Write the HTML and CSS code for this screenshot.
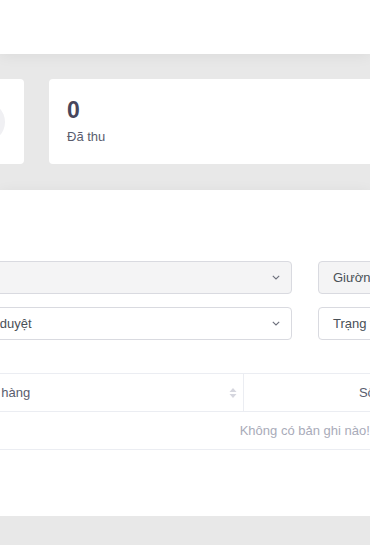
FILE: index.html
```html
<!DOCTYPE html>
<html lang="vi">

<head>
    <meta charset="UTF-8">
    <meta name="viewport" content="width=device-width, initial-scale=1.0">
    <title>Thống kê</title>
    <link rel="stylesheet" href="styles.css">
</head>

<body>
    <div class="topbar"></div>

    <div class="page">
        <div class="stats">
            <div class="stat-card">
                <div class="stat-icon"></div>
            </div>
            <div class="stat-card">
                <div class="stat-value">0</div>
                <div class="stat-label">Đã thu</div>
            </div>
        </div>
    </div>

    <div class="panel">
        <div class="page">
            <div class="filters">
                <div class="select disabled">
                    <span>Phòng</span>
                    <svg class="chevron" viewBox="0 0 8 5"><path d="M0.8 0.8l3.2 3.2 3.2-3.2" /></svg>
                </div>
                <div class="select disabled">
                    <span>Giường</span>
                    <svg class="chevron" viewBox="0 0 8 5"><path d="M0.8 0.8l3.2 3.2 3.2-3.2" /></svg>
                </div>
                <div class="select">
                    <span>Trạng thái đã duyệt</span>
                    <svg class="chevron" viewBox="0 0 8 5"><path d="M0.8 0.8l3.2 3.2 3.2-3.2" /></svg>
                </div>
                <div class="select">
                    <span>Trạng thái thanh toán</span>
                    <svg class="chevron" viewBox="0 0 8 5"><path d="M0.8 0.8l3.2 3.2 3.2-3.2" /></svg>
                </div>
            </div>

            <table class="data-table">
                <thead>
                    <tr>
                        <th class="col-no">#</th>
                        <th class="col-name">
                            <div class="th-inner">
                                <span>Mặt hàng</span>
                                <svg class="sort" viewBox="0 0 8 12">
                                    <path d="M4 1L7.5 5H0.5z" />
                                    <path d="M4 11L7.5 7H0.5z" />
                                </svg>
                            </div>
                        </th>
                        <th class="col-qty">Số lượng</th>
                        <th>Thành tiền</th>
                    </tr>
                </thead>
                <tbody>
                    <tr>
                        <td class="empty" colspan="4">Không có bản ghi nào!</td>
                    </tr>
                </tbody>
            </table>
        </div>
    </div>
</body>

</html>
```

FILE: styles.css
```css
body {
    margin: 0;
    background: #e8e8e8;
    font-family: "Liberation Sans", Arial, sans-serif;
    font-size: 13px;
    color: #595d6e;
    overflow: hidden;
}

.topbar {
    height: 54px;
    background: #ffffff;
    box-shadow: 0 2px 14px rgba(0, 0, 0, 0.06);
    position: relative;
}

.page {
    width: 800px;
    padding: 0 25px;
    margin-left: -120px;
}

.stats {
    display: grid;
    grid-template-columns: 119px 1fr;
    gap: 25px;
    padding: 25px 0 26px;
}

.stat-card {
    height: 85px;
    background: #ffffff;
    border-radius: 4px;
    padding: 0 18px;
    box-sizing: border-box;
    display: flex;
    flex-direction: column;
    justify-content: center;
}

.stat-card:first-child {
    align-items: flex-end;
    padding-right: 19px;
}

.stat-icon {
    width: 40px;
    height: 40px;
    border-radius: 50%;
    background: #f0f0f3;
}

.stat-value {
    font-size: 23px;
    font-weight: bold;
    color: #48465b;
    line-height: 28px;
    margin-top: -2px;
}

.stat-label {
    margin-top: 4px;
    line-height: 18px;
}

.panel {
    height: 326px;
    background: #ffffff;
    box-shadow: 0 3px 14px rgba(0, 0, 0, 0.07);
    position: relative;
    padding-top: 71px;
    box-sizing: border-box;
}

.filters {
    display: grid;
    grid-template-columns: 1fr 1fr;
    column-gap: 26px;
    row-gap: 13px;
}

.select {
    height: 33px;
    box-sizing: border-box;
    border: 1px solid #d9dae0;
    border-radius: 4px;
    background: #ffffff;
    padding: 0 11px 0 14px;
    display: flex;
    align-items: center;
    justify-content: space-between;
    color: #495057;
}

.select.disabled {
    background: #f4f4f5;
}

.chevron {
    width: 8px;
    height: 5px;
    fill: none;
    stroke: #6c6f7b;
    stroke-width: 1.1;
}

.data-table {
    width: 100%;
    border-collapse: collapse;
    margin-top: 33px;
}

.data-table th,
.data-table td {
    height: 37px;
    padding: 0 10px;
    border-top: 1px solid #ebedf2;
    border-bottom: 1px solid #ebedf2;
    font-weight: normal;
    color: #595d6e;
}

.data-table th {
    text-align: center;
    border-right: 1px solid #ebedf2;
}

.data-table th.col-no {
    width: 40px;
}

.data-table th.col-name {
    width: 261px;
    text-align: left;
    padding-right: 6px;
}

.data-table th.col-qty {
    width: 264px;
}

.th-inner {
    display: flex;
    align-items: center;
    justify-content: space-between;
}

.sort {
    width: 8px;
    height: 12px;
    fill: #d5d6de;
}

.data-table td.empty {
    text-align: center;
    color: #a9abb9;
}
```
